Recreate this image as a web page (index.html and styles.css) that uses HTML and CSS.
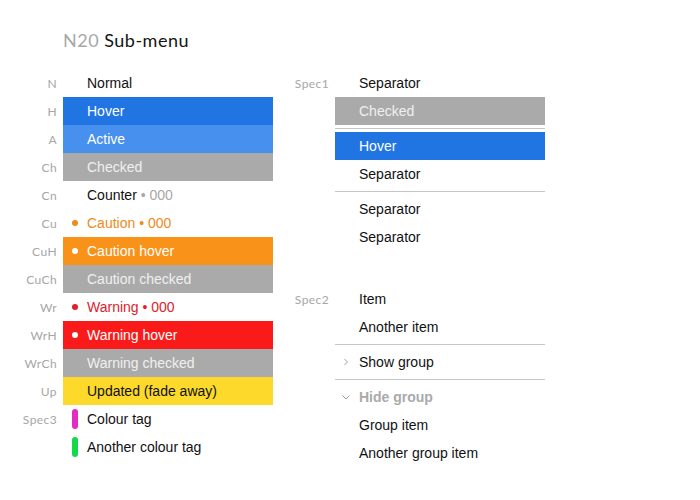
FILE: index.html
```html
<!DOCTYPE html>
<html>
<head>
<meta charset="utf-8">
<link rel="stylesheet" href="styles.css">
</head>
<body>
<div class="page">
  <h1 class="title"><span class="code">N20</span> Sub-menu</h1>
  <div class="columns">
    <div class="col">
      <div class="sec">
        <div class="lbl">N</div><div class="item">Normal</div>
        <div class="lbl">H</div><div class="item hover">Hover</div>
        <div class="lbl">A</div><div class="item active">Active</div>
        <div class="lbl">Ch</div><div class="item checked">Checked</div>
        <div class="lbl">Cn</div><div class="item">Counter <span class="count">• 000</span></div>
        <div class="lbl">Cu</div><div class="item caution"><span class="dot"></span>Caution • 000</div>
        <div class="lbl">CuH</div><div class="item caution-hover"><span class="dot"></span>Caution hover</div>
        <div class="lbl">CuCh</div><div class="item checked">Caution checked</div>
        <div class="lbl">Wr</div><div class="item warning"><span class="dot"></span>Warning • 000</div>
        <div class="lbl">WrH</div><div class="item warning-hover"><span class="dot"></span>Warning hover</div>
        <div class="lbl">WrCh</div><div class="item checked">Warning checked</div>
        <div class="lbl">Up</div><div class="item updated">Updated (fade away)</div>
        <div class="lbl">Spec3</div><div class="item"><span class="tag pink"></span>Colour tag</div>
        <div class="lbl"></div><div class="item"><span class="tag green"></span>Another colour tag</div>
      </div>
    </div>
    <div class="col">
      <div class="sec">
        <div class="lbl">Spec1</div><div class="item">Separator</div>
        <div class="lbl"></div><div class="item checked">Checked</div>
        <div class="lbl"></div><div class="sep"></div>
        <div class="lbl"></div><div class="item hover">Hover</div>
        <div class="lbl"></div><div class="item">Separator</div>
        <div class="lbl"></div><div class="sep"></div>
        <div class="lbl"></div><div class="item">Separator</div>
        <div class="lbl"></div><div class="item">Separator</div>
      </div>
      <div class="sec sec2">
        <div class="lbl">Spec2</div><div class="item">Item</div>
        <div class="lbl"></div><div class="item">Another item</div>
        <div class="lbl"></div><div class="sep"></div>
        <div class="lbl"></div><div class="item"><svg class="chev" width="8" height="8" viewBox="0 0 8 8"><polyline points="2.5,1 5.5,4 2.5,7" fill="none" stroke="#a0a0a0" stroke-width="1"/></svg>Show group</div>
        <div class="lbl"></div><div class="sep"></div>
        <div class="lbl"></div><div class="item group-open"><svg class="chev" width="8" height="8" viewBox="0 0 8 8"><polyline points="0.5,2.5 4,6 7.5,2.5" fill="none" stroke="#a0a0a0" stroke-width="1"/></svg>Hide group</div>
        <div class="lbl"></div><div class="item">Group item</div>
        <div class="lbl"></div><div class="item">Another group item</div>
      </div>
    </div>
  </div>
</div>
</body>
</html>
```
FILE: styles.css
```css
html, body {
  margin: 0;
  padding: 0;
  background: #ffffff;
}
.page {
  padding-top: 28px;
  width: 700px;
  height: 500px;
  box-sizing: border-box;
}
.title {
  margin: 0 0 17px 63px;
  font-family: Lato, "Noto Sans", sans-serif;
  font-weight: 400;
  font-size: 18px;
  line-height: 24px;
  letter-spacing: 0.5px;
  color: #141414;
}
.title .code {
  color: #a8a8a8;
}
.columns {
  display: grid;
  grid-template-columns: 272px 273px;
}
.sec {
  display: grid;
  grid-template-columns: 57px 210px;
  column-gap: 6px;
  align-items: center;
}
.sec2 {
  margin-top: 34px;
}
.lbl {
  text-align: right;
  font-family: Lato, "Noto Sans", sans-serif;
  font-size: 12px;
  letter-spacing: 0.4px;
  color: #a6a6a6;
}
.item {
  position: relative;
  height: 28px;
  line-height: 28px;
  padding-left: 24px;
  font-family: "Liberation Sans", Arial, sans-serif;
  font-size: 14px;
  color: #111111;
  white-space: nowrap;
}
.hover { background: #2075e3; color: #ffffff; }
.active { background: #4790ee; color: #ffffff; }
.checked { background: #aaaaaa; color: #f0f0f0; }
.count { color: #a8a8a8; }
.caution { color: #f08a18; }
.caution-hover { background: #f89219; color: #ffffff; }
.warning { color: #e0212b; }
.warning-hover { background: #fb1a1a; color: #ffffff; }
.updated { background: #fcd92b; color: #111111; }
.group-open { color: #aaaaaa; font-weight: bold; }
.dot {
  position: absolute;
  left: 9px;
  top: 11px;
  width: 6px;
  height: 6px;
  border-radius: 50%;
  background: currentColor;
}
.tag {
  position: absolute;
  left: 9px;
  top: 4px;
  width: 6px;
  height: 20px;
  border-radius: 3px;
}
.pink { background: #e42bc2; }
.green { background: #16d94a; }
.sep {
  height: 7px;
  display: flex;
  align-items: center;
}
.sep::before {
  content: "";
  display: block;
  width: 100%;
  height: 1px;
  background: #c6c6c6;
}
.chev {
  position: absolute;
  left: 7px;
  top: 10px;
}
```
